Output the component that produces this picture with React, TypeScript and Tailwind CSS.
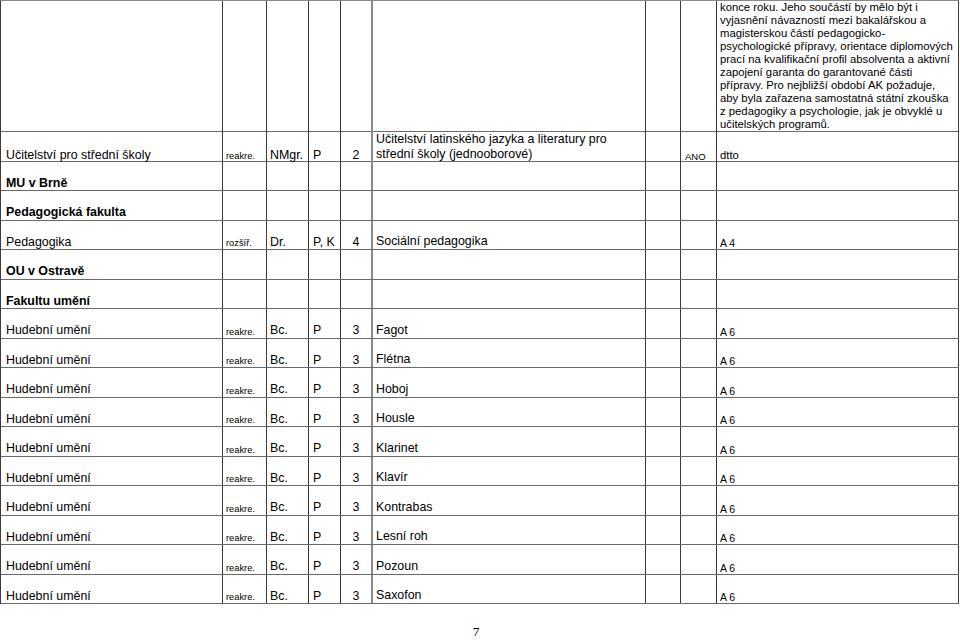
import React from "react";

type Row = {
  c1: string;
  bold?: boolean;
  c2?: string;
  c3?: string;
  c4?: string;
  c5?: string;
  c6?: string[];
  c8?: string;
  c9?: string;
  c9big?: boolean;
};

const longText = [
  "konce roku. Jeho součástí by mělo být i",
  "vyjasnění návazností mezi bakalářskou a",
  "magisterskou částí pedagogicko-",
  "psychologické přípravy, orientace diplomových",
  "prací na kvalifikační profil absolventa a aktivní",
  "zapojení garanta do garantované části",
  "přípravy. Pro nejbližší období AK požaduje,",
  "aby byla zařazena samostatná státní zkouška",
  "z pedagogiky a psychologie, jak je obvyklé u",
  "učitelských programů.",
];

const instruments = [
  "Fagot",
  "Flétna",
  "Hoboj",
  "Housle",
  "Klarinet",
  "Klavír",
  "Kontrabas",
  "Lesní roh",
  "Pozoun",
  "Saxofon",
];

const rows: Row[] = [
  {
    c1: "Učitelství pro střední školy",
    c2: "reakre.",
    c3: "NMgr.",
    c4: "P",
    c5: "2",
    c6: ["Učitelství latinského jazyka a literatury pro", "střední školy (jednooborové)"],
    c8: "ANO",
    c9: "dtto",
    c9big: true,
  },
  { c1: "MU v Brně", bold: true },
  { c1: "Pedagogická fakulta", bold: true },
  {
    c1: "Pedagogika",
    c2: "rozšíř.",
    c3: "Dr.",
    c4: "P, K",
    c5: "4",
    c6: ["Sociální pedagogika"],
    c9: "A 4",
  },
  { c1: "OU v Ostravě", bold: true },
  { c1: "Fakultu umění", bold: true },
  ...instruments.map((name) => ({
    c1: "Hudební umění",
    c2: "reakre.",
    c3: "Bc.",
    c4: "P",
    c5: "3",
    c6: [name],
    c9: "A 6",
  })),
];

const cell = "flex flex-col justify-end border-r border-[#3c3c3c] whitespace-nowrap";
const cols =
  "grid grid-cols-[222px_44px_42px_32px_32px_273px_35px_36px_242px] border-b border-[#6a6a6a]";

function TableRow({ row }: { row: Row }) {
  return (
    <div className={`${cols} h-[29.5px]`}>
      <div className={`${cell} pl-[5px] text-[12.4px] leading-[14.3px] ${row.bold ? "font-bold" : ""}`}>
        {row.c1}
      </div>
      <div className={`${cell} pl-[3px] text-[9.3px] leading-[10.7px]`}>{row.c2}</div>
      <div className={`${cell} pl-[3px] text-[12.4px] leading-[14.3px]`}>{row.c3}</div>
      <div className={`${cell} pl-[4px] text-[12.4px] leading-[14.3px]`}>{row.c4}</div>
      <div className={`${cell} items-center text-[12.4px] leading-[14.3px] border-r-2 border-r-[#8a8a8a]`}>
        {row.c5}
      </div>
      <div className={`${cell} pl-[3px] text-[12.4px] leading-[15px]`}>
        {row.c6?.map((l) => (
          <span key={l}>{l}</span>
        ))}
      </div>
      <div className={cell} />
      <div className={`${cell} pl-[4px] text-[9.5px] leading-[11px]`}>{row.c8}</div>
      <div
        className={`${cell} pl-[3px] ${
          row.c9big ? "text-[11.3px] leading-[13px]" : "text-[10.5px] leading-[12px]"
        }`}
      >
        {row.c9}
      </div>
    </div>
  );
}

export default function App() {
  return (
    <div
      className="w-[960px] h-[640px] overflow-hidden bg-white text-black flex flex-col"
      style={{ fontFamily: '"Liberation Sans", Arial, sans-serif' }}
    >
      <div className="w-[959px] border-l border-t border-[#3c3c3c] border-t-[#8a8a8a]">
        {/* carry-over row from previous page */}
        <div className={`${cols} h-[131px]`}>
          <div className={cell} />
          <div className={cell} />
          <div className={cell} />
          <div className={cell} />
          <div className={`${cell} border-r-2 border-r-[#8a8a8a]`} />
          <div className={cell} />
          <div className={cell} />
          <div className={cell} />
          <div className={`${cell} pl-[3px] pb-[1px] text-[11.3px] leading-[13px]`}>
            {longText.map((l) => (
              <span key={l}>{l}</span>
            ))}
          </div>
        </div>
        {rows.map((r, i) => (
          <TableRow key={i} row={r} />
        ))}
      </div>
      <div className="flex justify-center pt-[23px] pr-[8px]">
        <span
          className="text-[13.5px] leading-[10px]"
          style={{ fontFamily: '"Liberation Serif", "Times New Roman", serif' }}
        >
          7
        </span>
      </div>
    </div>
  );
}
